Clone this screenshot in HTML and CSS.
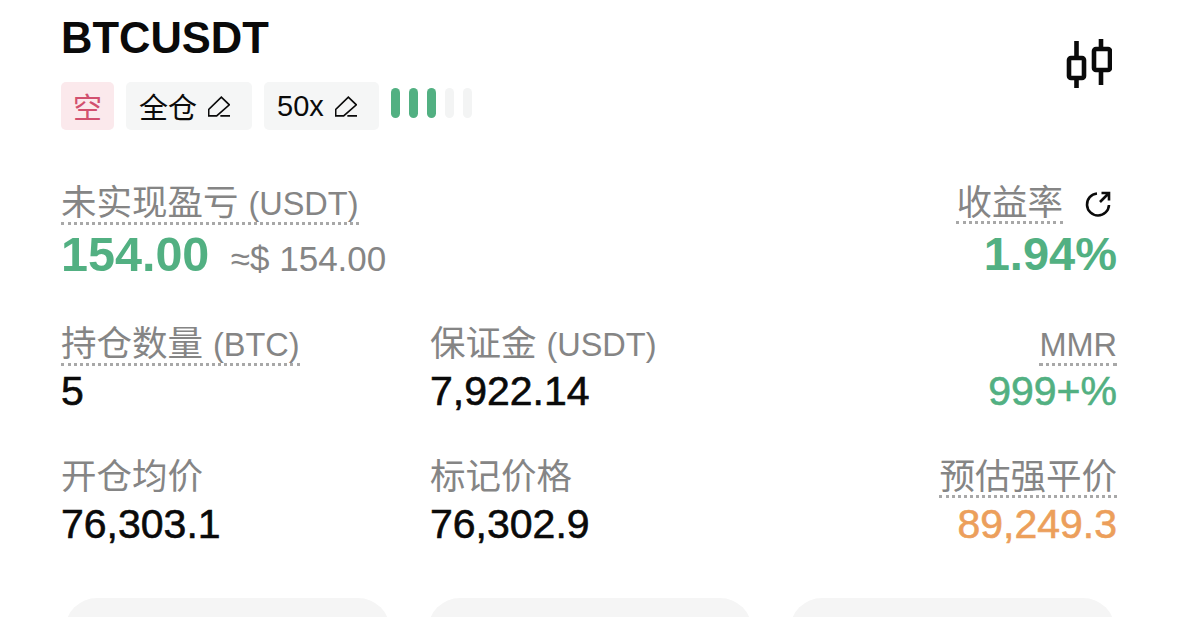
FILE: index.html
```html
<!DOCTYPE html>
<html>
<head>
<meta charset="utf-8" />
<title>BTCUSDT</title>
<link rel="stylesheet" href="styles.css">
</head>
<body>
<div class="header">
  <div>
    <h1 class="symbol">BTCUSDT</h1>
    <div class="tags">
      <span class="tag short">空</span>
      <span class="tag edit">全仓
        <svg class="pen" viewBox="0 0 66 62"><path d="M2 59 V40 L40 3 L64 26 L26 59 Z M37 59 H66"/></svg>
      </span>
      <span class="tag edit">50x
        <svg class="pen" viewBox="0 0 66 62"><path d="M2 59 V40 L40 3 L64 26 L26 59 Z M37 59 H66"/></svg>
      </span>
      <div class="risk">
        <i class="on"></i><i class="on"></i><i class="on"></i><i></i><i></i>
      </div>
    </div>
  </div>
  <svg class="candles" viewBox="0 0 46 49">
    <path d="M10.5 2 V17 M10.5 41 V49 M35 0 V8 M35 33 V46"/>
    <rect x="3" y="19" width="15" height="20" rx="2"/>
    <rect x="28" y="10" width="16" height="21" rx="2"/>
  </svg>
</div>

<div class="pnl-row">
  <div class="cell">
    <div class="label"><span class="dotted">未实现盈亏 <span class="unit">(USDT)</span></span></div>
    <div class="value big wide green">154.00 <span class="approx">≈$ 154.00</span></div>
  </div>
  <div class="cell right">
    <div class="label"><span class="dotted">收益率</span><svg class="share" viewBox="0 0 28 28"><path d="M13 3.5 A11 11 0 1 0 25 15 M16 12 L25 3 M17.5 3 H25 V10.5"/></svg></div>
    <div class="value big green">1.94%</div>
  </div>
</div>

<div class="grid">
  <div class="cell">
    <div class="label"><span class="dotted">持仓数量 <span class="unit">(BTC)</span></span></div>
    <div class="value">5</div>
  </div>
  <div class="cell">
    <div class="label">保证金 <span class="unit">(USDT)</span></div>
    <div class="value">7,922.14</div>
  </div>
  <div class="cell right">
    <div class="label"><span class="dotted unit">MMR</span></div>
    <div class="value green">999+%</div>
  </div>
  <div class="cell">
    <div class="label">开仓均价</div>
    <div class="value">76,303.1</div>
  </div>
  <div class="cell">
    <div class="label">标记价格</div>
    <div class="value">76,302.9</div>
  </div>
  <div class="cell right">
    <div class="label"><span class="dotted">预估强平价</span></div>
    <div class="value orange">89,249.3</div>
  </div>
</div>

<div class="actions">
  <a class="btn" href="#"></a>
  <a class="btn" href="#"></a>
  <a class="btn" href="#"></a>
</div>
</body>
</html>
```

FILE: styles.css
```css
* {
  box-sizing: border-box;
  margin: 0;
  padding: 0;
}
html, body {
  height: 617px;
  overflow: hidden;
}
body {
  background: #fff;
  color: #0a0a0a;
  font-family: "Liberation Sans", "Noto Sans CJK SC", sans-serif;
  padding: 11px 62px 0 61px;
}
.header {
  display: flex;
  justify-content: space-between;
}
.symbol {
  font-size: 43.5px;
  font-weight: 700;
  line-height: 54px;
}
.candles {
  fill: none;
  height: 49px;
  margin: 28px 5px 0 0;
  stroke: #0a0a0a;
  stroke-width: 4.6;
  width: 46px;
}
.tags {
  align-items: center;
  display: flex;
  gap: 12px;
  margin-top: 17px;
}
.tag {
  align-items: center;
  background: #f5f6f6;
  border-radius: 5px;
  display: flex;
  font-size: 29px;
  height: 48px;
}
.short {
  background: #fbe9ec;
  color: #d2506f;
  padding: 0 12px;
}
.edit {
  padding: 0 22px 0 13px;
}
.pen {
  fill: none;
  height: 21px;
  margin-left: 11px;
  stroke: #0a0a0a;
  stroke-width: 5;
  width: 22px;
}
.risk {
  display: flex;
  gap: 9px;
  padding-bottom: 6px;
}
.risk i {
  background: #f3f4f4;
  border-radius: 5px;
  height: 30px;
  width: 9px;
}
.risk i.on {
  background: #52b082;
}
.pnl-row {
  display: flex;
  justify-content: space-between;
  margin-top: 54px;
}
.grid {
  display: grid;
  grid-template-columns: 369px 1fr 1fr;
  margin-top: 44px;
  row-gap: 44px;
}
.right {
  text-align: right;
}
.label {
  color: #858585;
  font-size: 35.5px;
  height: 38px;
  line-height: 38px;
}
.unit {
  font-size: 32.5px;
}
.dotted {
  border-bottom: 3px dotted #a8a8a8;
  display: inline-block;
  line-height: 35px;
}
.share {
  fill: none;
  height: 28px;
  margin: 0 5px 0 21px;
  stroke: #0a0a0a;
  stroke-width: 2.6;
  vertical-align: -3px;
  width: 28px;
}
.value {
  -webkit-text-stroke: 0.6px;
  font-size: 41px;
  line-height: 46px;
  margin-top: 5px;
}
.big {
  -webkit-text-stroke: 0;
  font-size: 47px;
  font-weight: 700;
  line-height: 54px;
}
.wide {
  font-size: 48.5px;
}
.approx {
  color: #858585;
  font-size: 35px;
  font-weight: 400;
  line-height: 1;
  margin-left: 8px;
}
.green {
  color: #52b082;
}
.orange {
  color: #ec9f5b;
}
.actions {
  align-items: flex-start;
  display: flex;
  gap: 38px;
  height: 19px;
  margin-top: 51px;
  overflow: hidden;
  padding: 0 2px 0 4px;
}
.btn {
  background: #f5f5f5;
  border-radius: 32px;
  display: block;
  flex: 1;
  height: 70px;
}
```
